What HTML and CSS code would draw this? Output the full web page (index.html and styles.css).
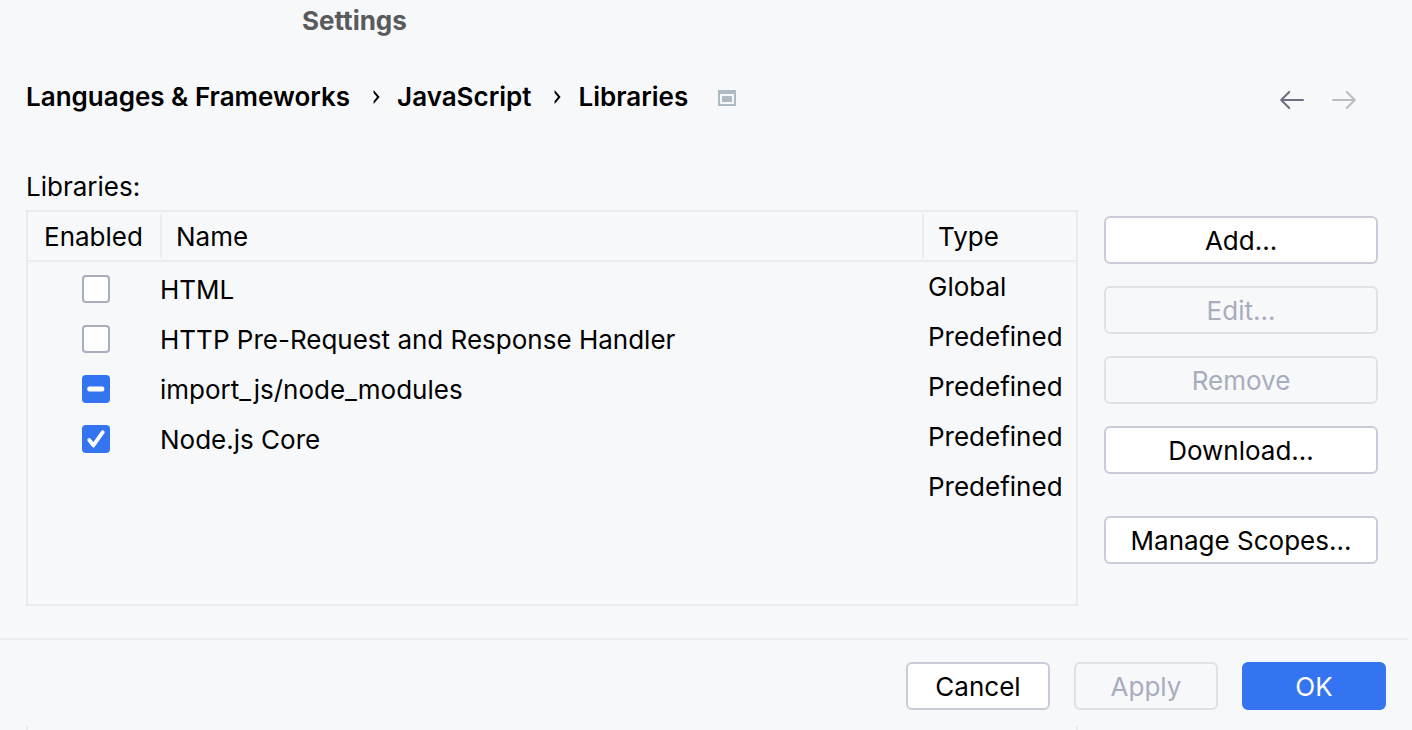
FILE: index.html
```html
<!DOCTYPE html>
<html lang="en">
<head>
<meta charset="utf-8">
<title>Settings</title>
<link rel="stylesheet" href="styles.css">
</head>
<body>
<div class="dialog">
  <header class="titlebar"><h1 class="title">Settings</h1></header>

  <div class="topbar">
    <nav class="crumbs" aria-label="Breadcrumb">
      <a class="crumb" href="#">Languages &amp; Frameworks</a>
      <svg class="chevron" viewBox="0 0 8 14" aria-hidden="true"><path d="M.6 0 L6.6 7 L.6 14 L.6 11 L4 7 L.6 3 Z"/></svg>
      <a class="crumb" href="#">JavaScript</a>
      <svg class="chevron" viewBox="0 0 8 14" aria-hidden="true"><path d="M.6 0 L6.6 7 L.6 14 L.6 11 L4 7 L.6 3 Z"/></svg>
      <a class="crumb" href="#" aria-current="page">Libraries</a>
      <svg class="project-icon" viewBox="0 0 18 16" aria-hidden="true"><path fill-rule="evenodd" d="M0 0H18V16H0Z M2 4V14H16V4Z M4 6H14V12H4Z"/></svg>
    </nav>
    <div class="history">
      <button class="arrow" type="button" aria-label="Back"><svg viewBox="0 0 24 18"><path d="M23 9H1.5M9.2 1L1.2 9L9.2 17"/></svg></button>
      <button class="arrow" type="button" aria-label="Forward" disabled><svg viewBox="0 0 24 18"><path d="M1 9H22.5M14.8 1L22.8 9L14.8 17"/></svg></button>
    </div>
  </div>

  <main class="content">
    <h2 class="label" id="libraries-label">Libraries:</h2>
    <div class="panel">
      <div class="table-box">
        <table class="libraries" aria-labelledby="libraries-label">
          <colgroup><col class="col-enabled"><col><col class="col-type"></colgroup>
          <thead>
            <tr>
              <th><span class="head">Enabled</span></th>
              <th><span class="head divided">Name</span></th>
              <th><span class="head divided">Type</span></th>
            </tr>
          </thead>
          <tbody>
            <tr>
              <td class="enabled"><input class="check" type="checkbox" id="lib-html"></td>
              <td class="name"><label for="lib-html">HTML</label></td>
              <td class="type">Global</td>
            </tr>
            <tr>
              <td class="enabled"><input class="check" type="checkbox" id="lib-http"></td>
              <td class="name"><label for="lib-http">HTTP Pre-Request and Response Handler</label></td>
              <td class="type">Predefined</td>
            </tr>
            <tr>
              <td class="enabled"><input class="check mixed" type="checkbox" id="lib-modules" aria-checked="mixed"></td>
              <td class="name"><label for="lib-modules">import_js/node_modules</label></td>
              <td class="type">Predefined</td>
            </tr>
            <tr>
              <td class="enabled"><input class="check" type="checkbox" id="lib-node" checked></td>
              <td class="name"><label for="lib-node">Node.js Core</label></td>
              <td class="type">Predefined</td>
            </tr>
            <tr>
              <td></td>
              <td></td>
              <td class="type">Predefined</td>
            </tr>
          </tbody>
        </table>
      </div>
      <div class="actions">
        <button class="btn" type="button">Add...</button>
        <button class="btn" type="button" disabled>Edit...</button>
        <button class="btn" type="button" disabled>Remove</button>
        <button class="btn" type="button">Download...</button>
        <button class="btn spaced" type="button">Manage Scopes...</button>
      </div>
    </div>
  </main>

  <footer class="footer">
    <button class="btn" type="button">Cancel</button>
    <button class="btn" type="button" disabled>Apply</button>
    <button class="btn primary" type="button">OK</button>
  </footer>
  <div class="under"></div>
</div>
</body>
</html>
```

FILE: styles.css
```css
* { box-sizing: border-box; }

body {
  margin: 0;
  background: #f7f8fa;
  color: #000;
  font: 26px/32px Inter, "Liberation Sans", sans-serif;
}

.dialog {
  display: flex;
  flex-direction: column;
  min-height: 100vh;
}

.titlebar { padding: 5px 0 0 302px; }

.title {
  margin: 0;
  font-size: 26px;
  font-weight: 700;
  color: #595a5c;
}

.topbar {
  display: flex;
  align-items: center;
  justify-content: space-between;
  padding: 44px 56px 0 26px;
}

.crumbs {
  display: flex;
  align-items: center;
}

.crumb {
  color: inherit;
  font-weight: 600;
  text-decoration: none;
}

.chevron {
  width: 8px;
  height: 14px;
  margin: 0 16px 0 23px;
}

.project-icon {
  width: 18px;
  height: 16px;
  margin: 2px 0 0 30px;
  fill: #afbbc3;
}

.history {
  display: flex;
  gap: 28px;
  padding-top: 6px;
}

.arrow {
  display: flex;
  padding: 0;
  border: 0;
  background: none;
  color: #6c707e;
}

.arrow:disabled { color: #bcbdbf; }

.arrow svg {
  width: 24px;
  height: 18px;
  fill: none;
  stroke: currentColor;
  stroke-width: 2;
  stroke-linecap: round;
  stroke-linejoin: round;
}

.content {
  flex: 1;
  display: flex;
  flex-direction: column;
  padding: 58px 34px 32px 26px;
}

.label {
  margin: 0;
  font-size: 26px;
  font-weight: 400;
}

.panel {
  flex: 1;
  display: flex;
  gap: 26px;
  padding-top: 7px;
}

.table-box {
  flex: 1;
  border: 2px solid #ebecee;
}

.libraries {
  width: 100%;
  table-layout: fixed;
  border-collapse: separate;
  border-spacing: 0;
}

.col-enabled { width: 132px; }
.col-type { width: 154px; }

.libraries th {
  height: 50px;
  padding: 2px 0;
  border-bottom: 2px solid #ebecee;
  font-weight: 400;
  text-align: left;
}

.head {
  display: block;
  padding: 7px 0 5px 16px;
}

.divided {
  padding-left: 14px;
  border-left: 2px solid #ebecee;
}

.libraries td {
  height: 50px;
  padding: 0;
}

.libraries .enabled { padding: 3px 0 0 54px; }
.libraries .name { padding-top: 5px; }
.libraries .type { padding-left: 6px; }

.check {
  display: block;
  width: 28px;
  height: 28px;
  margin: 0;
  appearance: none;
  border: 2px solid #a8adbd;
  border-radius: 4px;
  background: #fff;
}

.check:checked,
.check.mixed {
  border: 0;
  background: #3574f0 url('data:image/svg+xml,<svg xmlns="http://www.w3.org/2000/svg" viewBox="0 0 28 28"><path d="M7.2 15L11.4 20.4L20.8 7.2" fill="none" stroke="white" stroke-width="3.8" stroke-linecap="round" stroke-linejoin="round"/></svg>');
}

.check.mixed {
  background-image: url('data:image/svg+xml,<svg xmlns="http://www.w3.org/2000/svg" viewBox="0 0 28 28"><rect x="5.3" y="11.5" width="17" height="5" rx="2" fill="white"/></svg>');
}

.actions {
  display: flex;
  flex-direction: column;
  gap: 22px;
  width: 274px;
  padding-top: 6px;
}

.btn {
  height: 48px;
  padding: 2px 10px 0;
  border: 2px solid #c9cbd8;
  border-radius: 6px;
  background: #fff;
  color: #000;
  font: inherit;
}

.btn:disabled {
  border-color: #dfe1e5;
  background: transparent;
  color: #a8adbd;
}

.primary {
  border-color: #3574f0;
  background: #3574f0;
  color: #fff;
}

.spaced { margin-top: 20px; }

.footer {
  display: flex;
  justify-content: flex-end;
  gap: 24px;
  margin-right: 4px;
  padding: 22px 22px 16px;
  border-top: 2px solid #ebecee;
}

.footer .btn { width: 144px; }

.under {
  height: 4px;
  margin: 0 334px 0 26px;
  border: solid #ebecee;
  border-width: 0 2px;
}
```
